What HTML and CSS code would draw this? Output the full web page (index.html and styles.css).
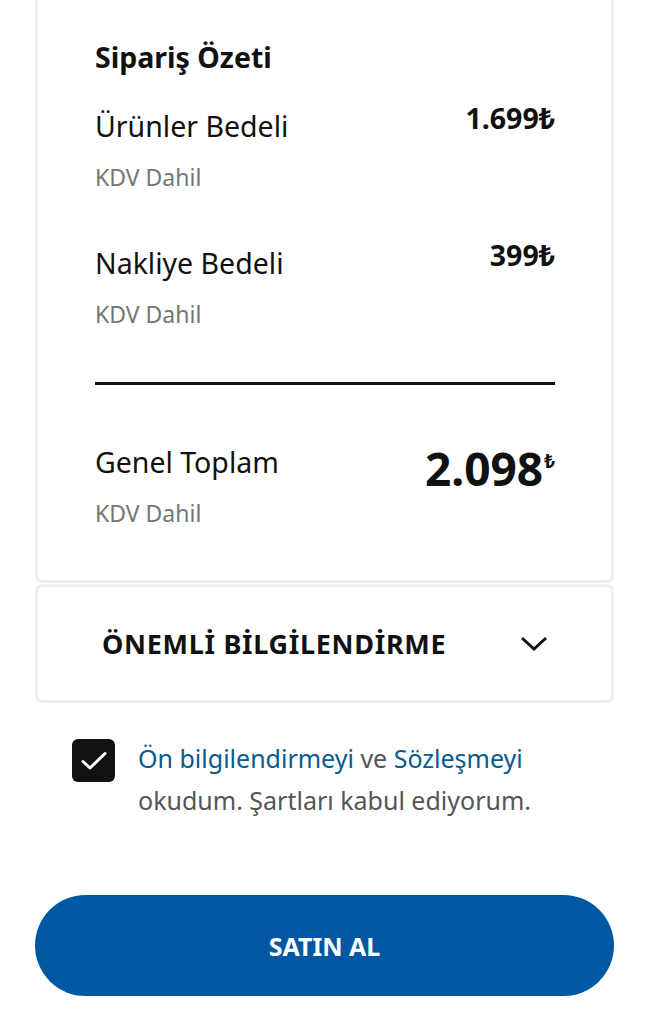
FILE: index.html
```html
<!DOCTYPE html>
<html lang="tr">
<head>
    <meta charset="UTF-8">
    <meta name="viewport" content="width=device-width, initial-scale=1.0">
    <title>Sipariş Özeti</title>
    <link rel="stylesheet" href="styles.css">
</head>
<body>
    <div class="page">
        <div class="card summary">
            <h2 class="summary-title">Sipariş Özeti</h2>

            <div class="row">
                <div>
                    <div class="label">Ürünler Bedeli</div>
                    <div class="note">KDV Dahil</div>
                </div>
                <div class="price">1.699₺</div>
            </div>

            <div class="row">
                <div>
                    <div class="label">Nakliye Bedeli</div>
                    <div class="note">KDV Dahil</div>
                </div>
                <div class="price">399₺</div>
            </div>

            <div class="divider"></div>

            <div class="row total">
                <div>
                    <div class="label">Genel Toplam</div>
                    <div class="note">KDV Dahil</div>
                </div>
                <div class="total-price">2.098<span class="currency">₺</span></div>
            </div>
        </div>

        <div class="card info">
            <span class="info-title">ÖNEMLİ BİLGİLENDİRME</span>
            <svg class="chevron" width="28" height="16" viewBox="0 0 28 16">
                <path d="M2 2 L14 13 L26 2" fill="none" stroke="#111" stroke-width="3"/>
            </svg>
        </div>

        <div class="agree">
            <div class="checkbox">
                <svg width="26" height="20" viewBox="0 0 26 20">
                    <path d="M2 10.5 L9 17 L24 2.5" fill="none" stroke="#fff" stroke-width="3" stroke-linecap="round" stroke-linejoin="round"/>
                </svg>
            </div>
            <p class="agree-text">
                <a href="#">Ön bilgilendirmeyi</a> ve <a href="#">Sözleşmeyi</a>
                okudum. Şartları kabul ediyorum.
            </p>
        </div>

        <button class="buy">SATIN AL</button>
    </div>
</body>
</html>
```

FILE: styles.css
```css
body {
    margin: 0;
    background-color: #fff;
    font-family: "Noto Sans", "Open Sans", sans-serif;
    color: #111;
}
.page {
    padding: 0 36px 0 35px;
}
.card {
    background-color: #fff;
    border: 3px solid #eeeeee;
    border-radius: 7px;
}
.summary {
    border-top: 0;
    border-radius: 0 0 7px 7px;
    padding: 39px 56px 52px 57px;
}
.summary-title {
    margin: 0 0 33px;
    font-size: 28.5px;
    font-weight: 700;
    line-height: 36px;
}
.row {
    display: flex;
    justify-content: space-between;
    align-items: flex-start;
    margin-bottom: 53px;
}
.label {
    font-size: 28.5px;
    line-height: 36px;
}
.note {
    margin-top: 18px;
    font-size: 23px;
    line-height: 30px;
    color: #757575;
}
.price {
    font-size: 28.5px;
    font-weight: 700;
    line-height: 20px;
}
.divider {
    height: 3px;
    background-color: #111;
    margin-bottom: 59px;
}
.row.total {
    margin-bottom: 0;
}
.total-price {
    font-size: 46px;
    font-weight: 700;
    line-height: 34px;
}
.currency {
    font-size: 19px;
    vertical-align: 18px;
    margin-left: 1px;
}
.info {
    margin-top: 1px;
    height: 113px;
    padding: 0 63px 0 64px;
    display: flex;
    justify-content: space-between;
    align-items: center;
}
.info-title {
    font-size: 27px;
    font-weight: 700;
    letter-spacing: 0.7px;
}
.chevron {
    display: block;
}
.agree {
    display: flex;
    align-items: flex-start;
    margin: 36px 0 0 37px;
}
.checkbox {
    flex: none;
    width: 43px;
    height: 43px;
    border-radius: 6px;
    background-color: #111;
    display: flex;
    align-items: center;
    justify-content: center;
}
.agree-text {
    margin: -2px 0 0 23px;
    font-size: 25px;
    line-height: 42px;
    color: #555;
    width: 420px;
}
.agree-text a {
    color: #0a5a8c;
    text-decoration: none;
}
.buy {
    display: block;
    width: 100%;
    height: 101px;
    margin-top: 74px;
    border: none;
    border-radius: 51px;
    background-color: #0058a3;
    color: #fff;
    font-family: "Noto Sans", "Open Sans", sans-serif;
    font-size: 25px;
    font-weight: 700;
    cursor: pointer;
}
```
